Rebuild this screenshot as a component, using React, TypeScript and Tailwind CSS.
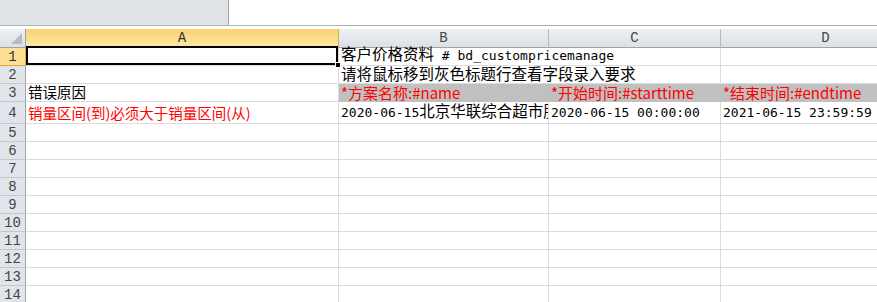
import React from 'react'

const cjk = "font-['Noto_Sans_CJK_SC',sans-serif] text-[15.5px]"
const mono = "font-['DejaVu_Sans_Mono','Liberation_Mono',monospace] text-[13px]"
const yahei = "font-['Noto_Sans_CJK_SC',sans-serif] text-[15px]"

const grid = 'border-r border-b border-[#dadcdd]'

function RowHead({ n, active }: { n: number; active?: boolean }) {
  return (
    <div
      className={
        'w-[26px] shrink-0 flex items-center justify-center pt-[1px] border-r border-b text-[14px] font-[Liberation_Mono,monospace] ' +
        (active
          ? 'bg-[#fadf95] border-r-[#e3a43c] border-b-[#e3a43c] text-[#333]'
          : 'bg-[#e1e5eb] border-r-[#9da3aa] border-b-[#c3c8ce] text-[#444]')
      }
    >
      {n}
    </div>
  )
}

function ColHead({ label, w, active }: { label: string; w: string; active?: boolean }) {
  return (
    <div
      className={
        w +
        ' shrink-0 flex items-center justify-center pt-[1px] border-r border-b text-[14px] font-[Liberation_Mono,monospace] ' +
        (active
          ? 'bg-gradient-to-b from-[#f8d36f] to-[#fee9a6] border-r-[#d9aa55] border-b-[#c39442] text-[#333]'
          : 'bg-gradient-to-b from-[#eef0f3] to-[#dce0e5] border-r-[#b3b8be] border-b-[#9da3aa] text-[#444]')
      }
    >
      {label}
    </div>
  )
}

function Cell({ w, className = '', children }: { w: string; className?: string; children?: React.ReactNode }) {
  return (
    <div className={w + ' shrink-0 flex items-end pb-[1px] pl-[2px] whitespace-pre leading-[16px] ' + className}>
      {children && <span>{children}</span>}
    </div>
  )
}

const wA = 'w-[313px]'
const wB = 'w-[210px]'
const wC = 'w-[172px]'
const wD = 'w-[210px]'

export default function App() {
  return (
    <div className="w-[877px] h-[302px] overflow-hidden bg-white text-black">
      {/* formula / name box strip */}
      <div className="flex h-[26px] border-b border-[#aeb2b7]">
        <div className="w-[229px] bg-[#dfe2e7] border-r border-[#a0a4a9]" />
        <div className="flex-1 bg-white" />
      </div>
      <div className="h-[3px]" />

      {/* column headers */}
      <div className="flex h-[19px]">
        <div className="relative w-[26px] shrink-0 border-r border-b border-[#9da3aa] bg-gradient-to-b from-[#eef0f3] to-[#dce0e5]">
          <div className="absolute right-[3px] bottom-[3px] w-0 h-0 border-l-[11px] border-l-transparent border-b-[11px] border-b-[#b7bcc2]" />
        </div>
        <ColHead label="A" w={wA} active />
        <ColHead label="B" w={wB} />
        <ColHead label="C" w={wC} />
        <ColHead label="D" w={wD} />
      </div>

      {/* row 1 */}
      <div className="flex h-[18px]">
        <RowHead n={1} active />
        <div className={wA + ' shrink-0 relative ' + grid}>
          <div className="absolute left-0 top-[-2px] right-0 bottom-0 border-2 border-black" />
          <div className="absolute right-[-3px] bottom-[-3px] w-[6px] h-[6px] bg-black border border-white" />
        </div>
        <Cell w={wB} className="border-b border-[#dadcdd]">
          <span className={cjk}>客户价格资料</span>
          <span className={mono}> # bd_custompricemanage</span>
        </Cell>
        <Cell w={wC} className={grid} />
        <Cell w={wD} className={grid} />
      </div>

      {/* row 2 */}
      <div className="flex h-[18px]">
        <RowHead n={2} />
        <Cell w={wA} className={grid} />
        <Cell w={wB} className="border-b border-[#dadcdd]">
          <span className={cjk}>请将鼠标移到灰色标题行查看字段录入要求</span>
        </Cell>
        <Cell w={wC} className={grid} />
        <Cell w={wD} className={grid} />
      </div>

      {/* row 3 */}
      <div className="flex h-[18px]">
        <RowHead n={3} />
        <Cell w={wA} className={grid}>
          <span className="font-['Noto_Sans_CJK_SC',sans-serif] text-[14.5px]">错误原因</span>
        </Cell>
        <Cell w={wB} className="bg-[#c0c0c0] text-[#ff0000]">
          <span className={yahei}>*方案名称:#name</span>
        </Cell>
        <Cell w={wC} className="bg-[#c0c0c0] text-[#ff0000]">
          <span className={yahei}>*开始时间:#starttime</span>
        </Cell>
        <Cell w={wD} className="bg-[#c0c0c0] text-[#ff0000]">
          <span className={yahei}>*结束时间:#endtime</span>
        </Cell>
      </div>

      {/* row 4 */}
      <div className="flex h-[22px]">
        <RowHead n={4} />
        <Cell w={wA} className={grid + ' text-[#ff0000] !pb-[2px]'}>
          <span className="font-['Noto_Sans_CJK_SC',sans-serif] text-[14.5px]">销量区间(到)必须大于销量区间(从)</span>
        </Cell>
        <Cell w={wB} className={grid + ' overflow-hidden !pb-[2px]'}>
          <span className={mono}>2020-06-15</span>
          <span className={cjk}>北京华联综合超市股份有限公司</span>
        </Cell>
        <Cell w={wC} className={grid + ' !pb-[2px]'}>
          <span className={mono}>2020-06-15 00:00:00</span>
        </Cell>
        <Cell w={wD} className={grid + ' !pb-[2px]'}>
          <span className={mono}>2021-06-15 23:59:59</span>
        </Cell>
      </div>

      {[5, 6, 7, 8, 9, 10, 11, 12, 13, 14].map((n) => (
        <div key={n} className="flex h-[18px]">
          <RowHead n={n} />
          <Cell w={wA} className={grid} />
          <Cell w={wB} className={grid} />
          <Cell w={wC} className={grid} />
          <Cell w={wD} className={grid} />
        </div>
      ))}
    </div>
  )
}
